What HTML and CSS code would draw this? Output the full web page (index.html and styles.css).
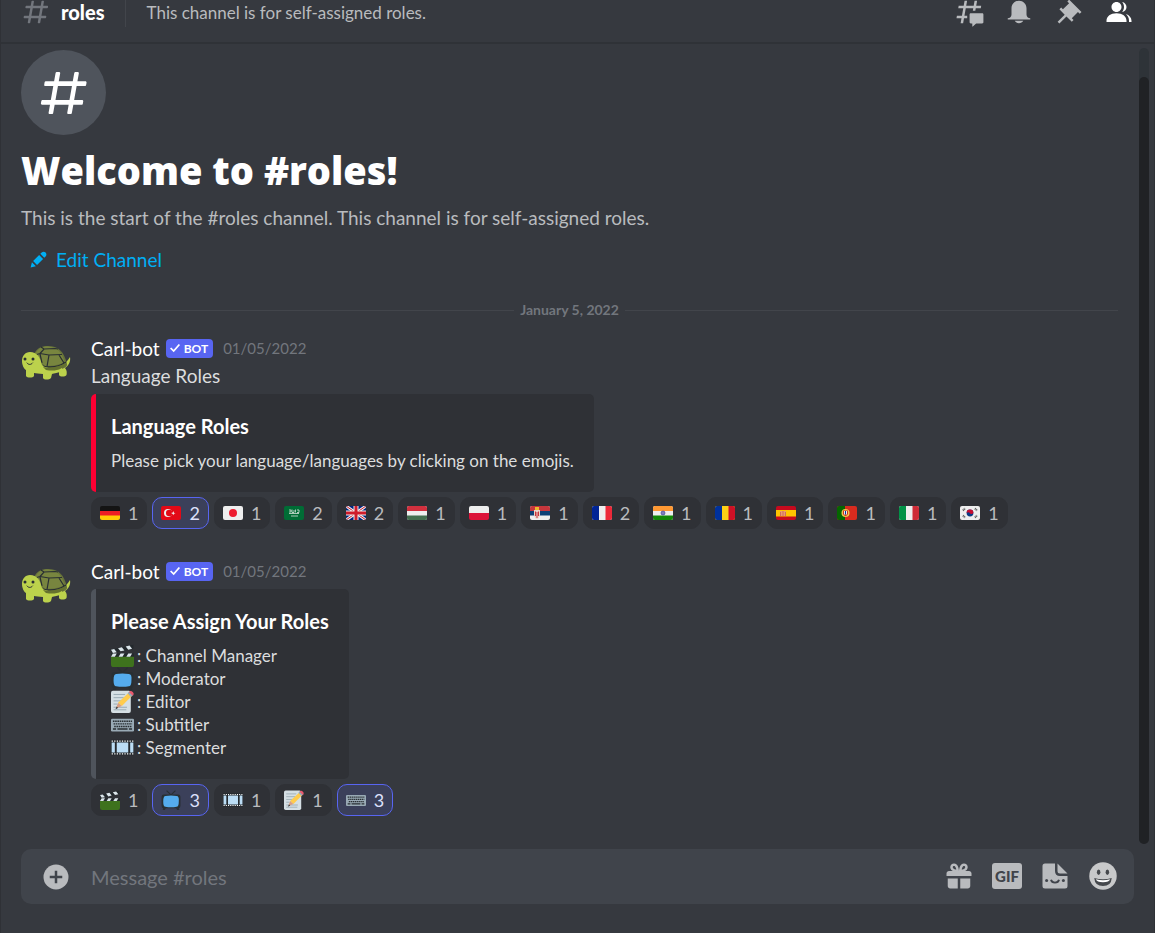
FILE: index.html
```html
<!DOCTYPE html>
<html lang="en">
<head>
<meta charset="utf-8">
<meta name="viewport" content="width=device-width, initial-scale=1">
<title>#roles</title>
<link rel="stylesheet" href="styles.css">
</head>
<body>
<svg class="defs" aria-hidden="true">
  <symbol id="hash" viewBox="0 0 24 24"><path fill-rule="evenodd" fill="currentColor" d="M5.887 21C5.575 21 5.34 20.719 5.394 20.413L6 17H2.595C2.284 17 2.049 16.72 2.103 16.414L2.278 15.414C2.319 15.175 2.527 15 2.77 15H6.35L7.41 9H4.005C3.694 9 3.459 8.72 3.513 8.414L3.688 7.414C3.729 7.175 3.937 7 4.18 7H7.76L8.397 3.413C8.439 3.174 8.647 3 8.889 3H9.873C10.185 3 10.42 3.281 10.366 3.587L9.76 7H15.76L16.397 3.413C16.439 3.174 16.647 3 16.889 3H17.873C18.185 3 18.42 3.281 18.366 3.587L17.76 7H21.165C21.476 7 21.711 7.28 21.657 7.586L21.482 8.586C21.441 8.825 21.233 9 20.99 9H17.41L16.35 15H19.755C20.066 15 20.301 15.28 20.247 15.586L20.072 16.586C20.031 16.825 19.823 17 19.58 17H16L15.363 20.587C15.321 20.826 15.113 21 14.871 21H13.887C13.576 21 13.34 20.719 13.394 20.413L14 17H8L7.363 20.587C7.321 20.826 7.113 21 6.871 21H5.887ZM9.41 9L8.35 15H14.35L15.41 9H9.41Z"/></symbol>
  <symbol id="turtle" viewBox="0 0 50 50">
    <path fill="#bcd24c" d="M40 22C44 20 47 16 49 13C50 18 47 22 44 24C46 26 46 29 45.500 31C44 33 39 33 38 31V26Z"/>
    <path fill="#66723a" d="M12 13C14 5 20 1.500 27 2C37 2 43 7 46 20C47 23 42 25 36 26H22Z"/>
    <path fill="#78853f" d="M14 11C16 5 20 2.500 27 2.500C36 3 41 8 43.500 18C38 21 31 22 24 22Z"/>
    <path fill="none" stroke="#292f33" stroke-width="1.200" d="M14 11L19 9.500L28 11L41 10.500M19 9.500L23 5L34 4.500L37 5M28 11L26 22.500M38 11L43 19M23 5L20 3M19 10L21 19"/>
    <path fill="none" stroke="#292f33" stroke-width="1.200" d="M22 22C30 24 39 22 45 18"/>
    <path fill="#bcd24c" d="M9 8C16 8 19 13 21 21C24 25 34 25 41 22V27C37 29 33 29 31 30L30 34C28 36 23 36 22 34V30C18 30 15 29 13 29V32C12 34 6 34 5 32V26C3 25 1 21 1 17C1 12 4 8 9 8Z"/>
    <path fill="#65722f" d="M22 23C30 25 39 22 45 19C43 25 35 28 25 26Z"/>
    <circle cx="4" cy="15" r="1.500" fill="#292f33"/><circle cx="12" cy="15" r="1.500" fill="#292f33"/>
    <path fill="none" stroke="#292f33" stroke-width="1" stroke-linecap="round" d="M6 19C7.500 21 10 21 11.500 19"/>
  </symbol>
  <symbol id="clapper" viewBox="0 0 36 36">
    <path fill="#3e721d" d="M2 17H36V32Q36 36 32 36H4Q0 36 0 32V15Z"/>
    <path fill="#23292d" d="M0 15H36V20H0ZM0 9L35 1V7L1 15Z"/>
    <path fill="#dce6eb" d="M3 15H9L6 20H0ZM15 15H21L18 20H12ZM27 15H33L30 20H24ZM0 9L5 8L9 13L3 14ZM11 6.500L17 5L21 10L15 11.500ZM23 4L29 2.500L33 7.500L27 9Z"/>
  </symbol>
  <symbol id="tv" viewBox="0 0 36 36">
    <path fill="none" stroke="#292f33" stroke-width="2" d="M10 1L18 9L26 1"/>
    <rect x="1" y="8" width="34" height="25" rx="4" fill="#292f33"/>
    <path fill="#292f33" d="M4 32H9L7 36H3ZM27 32H32L33 36H29Z"/>
    <path fill="#55acee" d="M8 11Q18 9 28 11Q33 11 32 21Q32 30 28 30Q18 32 8 30Q4 30 4 21Q4 11 8 11Z"/>
  </symbol>
  <symbol id="memo" viewBox="0 0 36 36">
    <rect x="0" y="1" width="31" height="35" rx="3" fill="#d5dfe4"/>
    <path stroke="#8fa1ac" stroke-width="1.300" d="M4 7H22M4 12H20M4 17H16M4 22H10M4 27H25M4 31H24"/>
    <path fill="#ffcc4d" d="M11 20L28 4L33 9L17 25Z"/>
    <path fill="#d99e82" d="M11 20L17 25L8 29Z"/><path fill="#292f33" d="M9 26L11 28L7 30Z"/>
    <path fill="#99aab5" d="M26 5L29 2L35 8L31 11Z"/><path fill="#ea596e" d="M28 3Q31 0 34 3Q37 6 34 9Z"/>
  </symbol>
  <symbol id="keyboard" viewBox="0 0 36 36">
    <rect x="0" y="9" width="36" height="20" rx="2" fill="#99aab5"/>
    <path stroke="#292f33" stroke-width="2.300" stroke-dasharray="2.500 1" d="M3 13H33M4 17H33M5 21H32"/>
    <path stroke="#292f33" stroke-width="2.500" d="M3 25H8M10 25H26M28 25H33"/>
  </symbol>
  <symbol id="film" viewBox="0 0 36 36">
    <path fill="#24292d" d="M0 6H36V30H0Z"/>
    <path fill="#bbddf5" d="M1 10H6V26H1ZM9 10H27V26H9ZM30 10H35V26H30Z"/>
    <path stroke="#fff" stroke-width="2" stroke-dasharray="2 2" d="M1 8H36M1 28H36"/>
  </symbol>
  <symbol id="bot-badge" viewBox="0 0 16 16"><path fill="none" stroke="#fff" stroke-width="2" d="M3 8L6.500 11.500L13 4"/></symbol>
  <clipPath id="flag-clip"><rect width="20" height="14" rx="2"/></clipPath>
</svg>

<div class="app">
  <header class="topbar">
    <svg class="icon topbar-hash"><use href="#hash"/></svg>
    <h2 class="topbar-name">roles</h2>
    <p class="topbar-topic">This channel is for self-assigned roles.</p>
    <div class="toolbar">
      <button class="icon-button" type="button" aria-label="Threads"><svg class="icon" viewBox="0 0 24 24" fill="currentColor"><path d="M5.433 21C5.358 21 5.302 20.933 5.315 20.859L6 17H2.143C2.068 17 2.012 16.933 2.025 16.859L2.333 15.099C2.343 15.042 2.392 15 2.451 15H6.350L7.410 9H3.553C3.478 9 3.422 8.933 3.435 8.859L3.743 7.099C3.753 7.042 3.802 7 3.861 7H7.760L8.452 3.099C8.463 3.042 8.512 3 8.570 3H10.327C10.401 3 10.458 3.067 10.445 3.141L9.760 7H15.760L16.452 3.099C16.463 3.042 16.512 3 16.571 3H18.327C18.401 3 18.458 3.067 18.445 3.141L17.760 7H21.617C21.692 7 21.748 7.067 21.735 7.141L21.427 8.901C21.417 8.958 21.367 9 21.309 9H17.410L17.050 11.040H15.050L15.410 9H9.410L8.350 15H10.560V17H8L7.307 20.901C7.297 20.958 7.248 21 7.189 21Z"/><path d="M13.440 12.960C12.910 12.960 12.480 13.390 12.480 13.920V20.221C12.480 20.752 12.910 21.181 13.440 21.181H14.400C14.533 21.181 14.640 21.289 14.640 21.421V23.460C14.640 23.668 14.887 23.777 15.041 23.638L17.486 21.429C17.662 21.270 17.892 21.181 18.129 21.181H22.560C23.090 21.181 23.520 20.752 23.520 20.221V13.920C23.520 13.390 23.090 12.960 22.560 12.960Z"/></svg></button>
      <button class="icon-button" type="button" aria-label="Notification settings"><svg class="icon" viewBox="0 0 24 24" fill="currentColor"><path d="M18 9V14C18 15.657 19.344 17 21 17V18H3V17C4.656 17 6 15.657 6 14V9C6 5.686 8.686 3 12 3C15.314 3 18 5.686 18 9ZM12 21C10.524 21 9.248 20.190 8.555 19H15.445C14.752 20.190 13.476 21 12 21Z"/></svg></button>
      <button class="icon-button" type="button" aria-label="Pinned messages"><svg class="icon" viewBox="0 0 24 24" fill="currentColor"><path d="M22 12L12.101 2.101L10.686 3.514L12.101 4.929L7.151 9.878V9.880L5.736 8.465L4.322 9.880L8.565 14.122L2.908 19.778L4.322 21.192L9.979 15.536L14.222 19.778L15.636 18.364L14.222 16.950L19.171 12H19.172L20.586 13.414Z"/></svg></button>
      <button class="icon-button is-active" type="button" aria-label="Member list"><svg class="icon" viewBox="0 0 24 24" fill="currentColor"><path d="M14 8.006C14 10.211 12.206 12.006 10 12.006C7.795 12.006 6 10.211 6 8.006C6 5.801 7.794 4.006 10 4.006C12.206 4.006 14 5.801 14 8.006ZM2 19.006C2 15.473 5.290 13.006 10 13.006C14.711 13.006 18 15.473 18 19.006V20.006H2Z"/><path d="M20 20.006H22V19.006C22 16.443 20.270 14.442 17.521 13.535C19.062 14.913 20 16.806 20 19.006ZM14.883 11.908C16.666 11.504 18 9.908 18 8.006C18 5.969 16.469 4.282 14.497 4.037C15.432 5.095 16 6.485 16 8.006C16 9.449 15.489 10.774 14.638 11.810Z"/></svg></button>
    </div>
  </header>

  <div class="scroller">
    <main class="content">
      <section class="welcome">
        <div class="channel-badge"><svg class="channel-badge-hash"><use href="#hash"/></svg></div>
        <h1 class="welcome-title">Welcome to #roles!</h1>
        <p class="welcome-text">This is the start of the #roles channel. This channel is for self-assigned roles.</p>
        <button class="edit-channel" type="button"><svg class="edit-icon" viewBox="0 0 24 24" fill="currentColor"><path fill-rule="evenodd" d="M19.293 9.830L20.982 8.141C22.339 6.784 22.339 4.567 20.982 3.175C19.625 1.818 17.408 1.818 16.016 3.175L14.327 4.863ZM12.808 6.382L5.184 14.006L10.151 18.973L17.774 11.349ZM2.015 22.143L8.681 20.443L3.714 15.476Z"/></svg>Edit Channel</button>
      </section>

      <div class="date-divider"><span class="date-text">January 5, 2022</span></div>

      <article class="message">
        <svg class="avatar" role="img" aria-label="Carl-bot"><use href="#turtle"/></svg>
        <div class="message-body">
          <div class="message-head"><span class="author">Carl-bot</span><span class="bot-tag"><svg class="bot-check"><use href="#bot-badge"/></svg>BOT</span><time class="timestamp">01/05/2022</time></div>
          <p class="message-text">Language Roles</p>
          <div class="embed embed-red">
            <h3 class="embed-title">Language Roles</h3>
            <p class="embed-text">Please pick your language/languages by clicking on the emojis.</p>
          </div>
          <div class="reactions">
            <button class="reaction" type="button" aria-label="Germany"><svg class="flag" viewBox="0 0 20 14"><g clip-path="url(#flag-clip)"><path fill="#141414" d="M0 0H20V5H0Z"/><path fill="#ed1f24" d="M0 5H20V10H0Z"/><path fill="#ffcd05" d="M0 9.500H20V14H0Z"/></g></svg>1</button>
            <button class="reaction is-mine" type="button" aria-label="Turkey"><svg class="flag" viewBox="0 0 20 14"><rect width="20" height="14" rx="2" fill="#e30917"/><circle cx="7" cy="7" r="4" fill="#eee"/><circle cx="8.200" cy="7" r="3.200" fill="#e30917"/><path fill="#eee" d="M10 7L11.800 6.500L12.700 5L12.900 6.700L14.500 7.300L12.900 7.700L12.300 9.200L11.500 7.700Z"/></svg>2</button>
            <button class="reaction" type="button" aria-label="Japan"><svg class="flag" viewBox="0 0 20 14"><rect width="20" height="14" rx="2" fill="#eee"/><circle cx="10" cy="7" r="4" fill="#ed1b2f"/></svg>1</button>
            <button class="reaction" type="button" aria-label="Saudi Arabia"><svg class="flag" viewBox="0 0 20 14"><rect width="20" height="14" rx="2" fill="#006c35"/><path fill="none" stroke="#d5e5dc" stroke-width=".8" d="M5 4H7V6H5M8 3.500V6.500H10V4M11.500 3.500V6.500M13 4H15V6.500H13M5 7.500H15M7 10H14"/></svg>2</button>
            <button class="reaction" type="button" aria-label="United Kingdom"><svg class="flag" viewBox="0 0 20 14"><g clip-path="url(#flag-clip)"><path fill="#00247d" d="M0 0H20V14H0Z"/><path stroke="#eee" stroke-width="3" d="M0 0L20 14M20 0L0 14"/><path stroke="#cf1b2b" stroke-width="1" d="M0 0L20 14M20 0L0 14"/><path stroke="#eee" stroke-width="5" d="M10 0V14M0 7H20"/><path stroke="#cf1b2b" stroke-width="3" d="M10 0V14M0 7H20"/></g></svg>2</button>
            <button class="reaction" type="button" aria-label="Hungary"><svg class="flag" viewBox="0 0 20 14"><g clip-path="url(#flag-clip)"><path fill="#eee" d="M0 0H20V14H0Z"/><path fill="#d2303e" d="M0 0H20V5H0Z"/><path fill="#446f4f" d="M0 9.500H20V14H0Z"/></g></svg>1</button>
            <button class="reaction" type="button" aria-label="Poland"><svg class="flag" viewBox="0 0 20 14"><g clip-path="url(#flag-clip)"><path fill="#eee" d="M0 0H20V7H0Z"/><path fill="#dc1339" d="M0 7H20V14H0Z"/></g></svg>1</button>
            <button class="reaction" type="button" aria-label="Serbia"><svg class="flag" viewBox="0 0 20 14"><g clip-path="url(#flag-clip)"><path fill="#eee" d="M0 0H20V14H0Z"/><path fill="#c6363c" d="M0 0H20V5H0Z"/><path fill="#0c4076" d="M0 5H20V9.500H0Z"/><path fill="#e9d5cc" d="M4 4H10V9Q9 13 7 13Q5 13 4 9Z"/><path stroke="#c6363c" stroke-width="1" d="M5.500 5.500V10M8.500 5.500V10M7 6V12"/><path fill="#edb92e" d="M5 1H9V4H5Z"/></g></svg>1</button>
            <button class="reaction" type="button" aria-label="France"><svg class="flag" viewBox="0 0 20 14"><g clip-path="url(#flag-clip)"><path fill="#eee" d="M0 0H20V14H0Z"/><path fill="#002495" d="M0 0H7V14H0Z"/><path fill="#ed2939" d="M13.500 0H20V14H13.500Z"/></g></svg>2</button>
            <button class="reaction" type="button" aria-label="India"><svg class="flag" viewBox="0 0 20 14"><g clip-path="url(#flag-clip)"><path fill="#eee" d="M0 0H20V14H0Z"/><path fill="#ff9933" d="M0 0H20V5H0Z"/><path fill="#138808" d="M0 9.500H20V14H0Z"/><circle cx="10" cy="7" r="2" fill="#8080bb" stroke="#33338f" stroke-width=".6"/></g></svg>1</button>
            <button class="reaction" type="button" aria-label="Romania"><svg class="flag" viewBox="0 0 20 14"><g clip-path="url(#flag-clip)"><path fill="#fcd116" d="M0 0H20V14H0Z"/><path fill="#00319c" d="M0 0H7V14H0Z"/><path fill="#ce1126" d="M13.500 0H20V14H13.500Z"/></g></svg>1</button>
            <button class="reaction" type="button" aria-label="Spain"><svg class="flag" viewBox="0 0 20 14"><g clip-path="url(#flag-clip)"><path fill="#c60a1d" d="M0 0H20V14H0Z"/><path fill="#ffc400" d="M0 4H20V10.500H0Z"/><path fill="#ea9a70" d="M4 5H10V10H4Z"/><path stroke="#c8605a" stroke-width=".8" d="M4.500 6V10M7 5V10M9.500 6V10"/></g></svg>1</button>
            <button class="reaction" type="button" aria-label="Portugal"><svg class="flag" viewBox="0 0 20 14"><g clip-path="url(#flag-clip)"><path fill="#d82b1e" d="M0 0H20V14H0Z"/><path fill="#056600" d="M0 0H8V14H0Z"/><circle cx="8.500" cy="7" r="4" fill="#f1c94a"/><path fill="#ca3028" d="M6 4.500H11V8Q8.500 12 6 8Z"/><path fill="#eee" d="M7 5H10V8.500H7Z"/><path stroke="#063e93" stroke-width="1" d="M8.500 5V8.500"/></g></svg>1</button>
            <button class="reaction" type="button" aria-label="Italy"><svg class="flag" viewBox="0 0 20 14"><g clip-path="url(#flag-clip)"><path fill="#eee" d="M0 0H20V14H0Z"/><path fill="#009246" d="M0 0H7V14H0Z"/><path fill="#ce2b37" d="M13.500 0H20V14H13.500Z"/></g></svg>1</button>
            <button class="reaction" type="button" aria-label="South Korea"><svg class="flag" viewBox="0 0 20 14"><rect width="20" height="14" rx="2" fill="#eee"/><circle cx="10" cy="7" r="3.400" fill="#0b3a83"/><path fill="#c60c30" d="M6.600 7A3.400 3.400 0 0 1 13.400 7Q11.500 9 10 7.200Q8.500 5.600 6.600 7Z"/><path stroke="#444" stroke-width="2" stroke-dasharray=".8 .4" d="M3 4.500L5 2.500M15 2.500L17 4.500M3 9.500L5 11.500M15 11.500L17 9.500"/></svg>1</button>
          </div>
        </div>
      </article>

      <article class="message">
        <svg class="avatar" role="img" aria-label="Carl-bot"><use href="#turtle"/></svg>
        <div class="message-body">
          <div class="message-head"><span class="author">Carl-bot</span><span class="bot-tag"><svg class="bot-check"><use href="#bot-badge"/></svg>BOT</span><time class="timestamp">01/05/2022</time></div>
          <div class="embed">
            <h3 class="embed-title">Please Assign Your Roles</h3>
            <ul class="role-list">
              <li class="role"><svg class="emoji"><use href="#clapper"/></svg>: Channel Manager</li>
              <li class="role"><svg class="emoji"><use href="#tv"/></svg>: Moderator</li>
              <li class="role"><svg class="emoji"><use href="#memo"/></svg>: Editor</li>
              <li class="role"><svg class="emoji"><use href="#keyboard"/></svg>: Subtitler</li>
              <li class="role"><svg class="emoji"><use href="#film"/></svg>: Segmenter</li>
            </ul>
          </div>
          <div class="reactions">
            <button class="reaction" type="button" aria-label="Channel Manager"><svg class="reaction-emoji"><use href="#clapper"/></svg>1</button>
            <button class="reaction is-mine" type="button" aria-label="Moderator"><svg class="reaction-emoji"><use href="#tv"/></svg>3</button>
            <button class="reaction" type="button" aria-label="Segmenter"><svg class="reaction-emoji"><use href="#film"/></svg>1</button>
            <button class="reaction" type="button" aria-label="Editor"><svg class="reaction-emoji"><use href="#memo"/></svg>1</button>
            <button class="reaction is-mine" type="button" aria-label="Subtitler"><svg class="reaction-emoji"><use href="#keyboard"/></svg>3</button>
          </div>
        </div>
      </article>
    </main>
    <div class="scrollbar"><div class="scrollbar-thumb"></div></div>
  </div>

  <form class="composer">
    <button class="icon-button" type="button" aria-label="Attach a file"><svg class="icon" viewBox="0 0 24 24"><circle cx="12" cy="12" r="10" fill="currentColor"/><path stroke="#40444b" stroke-width="2" d="M12 7V17M7 12H17"/></svg></button>
    <input class="composer-input" type="text" placeholder="Message #roles" aria-label="Message #roles">
    <div class="composer-tools">
      <button class="icon-button" type="button" aria-label="Send a gift"><svg class="icon" viewBox="0 0 24 24" fill="currentColor"><path fill-rule="evenodd" d="M16.886 7.999H20C21.104 7.999 22 8.896 22 9.999V11.999H2V9.999C2 8.896 2.897 7.999 4 7.999H7.114C6.663 7.764 6.236 7.477 5.879 7.121C4.709 5.951 4.709 4.048 5.879 2.879C7.012 1.746 8.986 1.745 10.121 2.877C11.758 4.514 11.979 7.595 11.998 7.941L11.990 7.999H12.010L12.002 7.941C12.022 7.595 12.242 4.514 13.879 2.877C15.014 1.745 16.986 1.746 18.121 2.877C19.290 4.049 19.290 5.952 18.121 7.121C17.764 7.477 17.337 7.764 16.886 7.999ZM7.293 5.707C6.903 5.316 6.903 4.682 7.293 4.292C7.481 4.103 7.732 4 8 4C8.268 4 8.519 4.103 8.707 4.292C9.297 4.882 9.641 5.940 9.825 6.822C8.945 6.639 7.879 6.293 7.293 5.707ZM14.174 6.824C14.359 5.941 14.702 4.883 15.293 4.293C15.481 4.103 15.732 4 16 4C16.268 4 16.519 4.103 16.706 4.291C17.096 4.682 17.097 5.316 16.707 5.707C16.116 6.298 15.057 6.642 14.174 6.824ZM3 13.999V19.999C3 21.102 3.897 21.999 5 21.999H11V13.999ZM13 13.999V21.999H19C20.104 21.999 21 21.102 21 19.999V13.999Z"/></svg></button>
      <button class="gif-button" type="button">GIF</button>
      <button class="icon-button" type="button" aria-label="Stickers"><svg class="icon" viewBox="0 0 24 24"><path fill="currentColor" d="M4 2H12V8Q12 12 16 12H22V20Q22 22 20 22H4Q2 22 2 20V4Q2 2 4 2ZM14 2L22 10H16Q14 10 14 8Z"/><circle cx="5.300" cy="15.500" r="1.200" fill="#40444b"/><circle cx="18.700" cy="15.500" r="1.200" fill="#40444b"/><path fill="none" stroke="#40444b" stroke-width="1.500" d="M8.800 15C9.500 18 14.500 18 15.200 15"/></svg></button>
      <button class="icon-button" type="button" aria-label="Emoji"><svg class="icon" viewBox="0 0 24 24"><circle cx="12" cy="12" r="11" fill="#c8c9ca"/><ellipse cx="8.500" cy="9" rx="1.400" ry="2.200" fill="#45484c"/><ellipse cx="15.500" cy="9" rx="1.400" ry="2.200" fill="#45484c"/><path fill="#45484c" d="M5 13.500Q12 15.500 19 13.500Q18.500 20 12 20Q5.500 20 5 13.500Z"/><path fill="#fff" d="M6.300 14.600Q12 16 17.700 14.600Q17 17 12 17Q7 17 6.300 14.600Z"/></svg></button>
    </div>
  </form>
</div>
</body>
</html>
```
FILE: styles.css
```css
* {
  box-sizing: border-box;
}

body {
  margin: 0;
  background: #36393f;
  color: #dcddde;
  font-family: Lato, "Noto Sans", sans-serif;
  font-size: 19px;
}

h1, h2, h3, p, ul {
  margin: 0;
  padding: 0;
}

button {
  padding: 0;
  border: 0;
  background: none;
  color: inherit;
  font: inherit;
  cursor: pointer;
}

svg {
  display: block;
  flex: none;
}

.defs {
  position: absolute;
  width: 0;
  height: 0;
}

.app {
  display: flex;
  flex-direction: column;
  min-height: 100vh;
  border-left: 1px solid #2f3136;
  border-right: 1px solid #2f3136;
}

.icon {
  width: 30px;
  height: 30px;
}

.icon-button {
  width: 30px;
  height: 30px;
  color: #b9bbbe;
}

.icon-button.is-active {
  color: #fff;
}

/* Channel header */
.topbar {
  display: flex;
  align-items: center;
  height: 44px;
  padding: 0 20px 18px;
  border-bottom: 2px solid #2f3237;
}

.topbar-hash {
  color: #72767d;
}

.topbar-name {
  margin-left: 10px;
  padding-right: 20px;
  border-right: 1px solid #42454b;
  color: #fff;
  font-size: 20px;
  font-weight: 900;
  line-height: 30px;
}

.topbar-topic {
  flex: 1;
  padding-left: 21px;
  color: #b9bbbe;
  font-size: 17px;
}

.toolbar {
  display: flex;
  gap: 20px;
}

/* Message area */
.scroller {
  display: flex;
  flex: 1;
  padding-right: 5px;
}

.content {
  flex: 1;
  min-width: 0;
  padding: 6px 21px 0 20px;
}

.scrollbar {
  width: 10px;
  margin: 4px 0 5px;
  padding-top: 29px;
  border-radius: 5px;
  background: #2e3338;
}

.scrollbar-thumb {
  height: 100%;
  border-radius: 5px;
  background: #202225;
}

.channel-badge {
  display: grid;
  place-items: center;
  width: 85px;
  height: 85px;
  border-radius: 50%;
  background: #4f545c;
  color: #fff;
}

.channel-badge-hash {
  width: 56px;
  height: 56px;
}

.welcome-title {
  margin-top: 10px;
  color: #fff;
  font-family: "Open Sans", "Noto Sans", sans-serif;
  font-size: 38px;
  font-weight: 800;
  line-height: 50px;
}

.welcome-text {
  margin-top: 10px;
  color: #b9bbbe;
  line-height: 25px;
}

.edit-channel {
  display: flex;
  align-items: center;
  gap: 8px;
  height: 30px;
  margin-top: 14px;
  padding: 0 8px;
  color: #00aff4;
}

.edit-icon {
  width: 19px;
  height: 19px;
}

.date-divider {
  display: flex;
  align-items: center;
  gap: 6px;
  margin-top: 27px;
  color: #72767d;
  font-size: 14px;
  font-weight: 700;
  line-height: 18px;
}

.date-divider::before,
.date-divider::after {
  content: "";
  flex: 1;
  height: 1px;
  background: #42454b;
}

.message {
  display: flex;
  gap: 20px;
  margin-top: 28px;
}

.date-divider + .message {
  margin-top: 15px;
}

.avatar {
  width: 50px;
  height: 50px;
  margin-top: 10px;
}

.message-body {
  flex: 1;
  min-width: 0;
}

.message-head {
  display: flex;
  align-items: center;
  height: 28px;
}

.author {
  color: #fff;
}

.bot-tag {
  display: flex;
  align-items: center;
  gap: 2px;
  height: 19px;
  margin-left: 6px;
  padding: 0 5px 0 2px;
  border-radius: 4px;
  background: #5865f2;
  color: #fff;
  font-size: 12px;
  font-weight: 700;
}

.bot-check {
  width: 14px;
  height: 14px;
}

.timestamp {
  margin-left: 10px;
  color: #72767d;
  font-size: 15px;
}

.message-text {
  line-height: 28px;
}

.embed {
  width: fit-content;
  max-width: 100%;
  margin-top: 4px;
  padding: 20px 20px 20px 15px;
  border-left: 5px solid #4f545c;
  border-radius: 5px;
  background: #2f3136;
}

.embed-red {
  border-left-color: #ff0033;
}

.embed-title {
  margin-bottom: 10px;
  color: #fff;
  font-size: 20px;
  font-weight: 700;
  line-height: 25px;
}

.embed-text {
  font-size: 17px;
  line-height: 23px;
}

.role-list {
  list-style: none;
}

.role {
  display: flex;
  align-items: center;
  gap: 3px;
  height: 23px;
  font-size: 17px;
}

.emoji {
  width: 23px;
  height: 23px;
}

.reactions {
  display: flex;
  flex-wrap: wrap;
  gap: 5px;
  margin-top: 5px;
}

.reaction {
  display: flex;
  align-items: center;
  gap: 8px;
  height: 32px;
  padding: 0 8px;
  border: 1px solid #2f3136;
  border-radius: 10px;
  background: #2f3136;
  color: #b9bbbe;
  font-size: 18px;
}

.reaction.is-mine {
  border-color: #5865f2;
  background: #3b405a;
  color: #dee0fc;
}

.flag {
  width: 20px;
  height: 14px;
}

.reaction-emoji {
  width: 20px;
  height: 20px;
}

/* Message box */
.composer {
  display: flex;
  align-items: center;
  height: 55px;
  margin: 0 20px 29px;
  padding: 0 16px 0 20px;
  border-radius: 10px;
  background: #40444b;
}

.composer-input {
  flex: 1;
  min-width: 0;
  height: 40px;
  margin-left: 20px;
  padding: 0;
  border: 0;
  outline: 0;
  background: none;
  color: #dcddde;
  font: inherit;
  font-size: 20px;
}

.composer-input::placeholder {
  color: #72767d;
  opacity: 1;
}

.composer-tools {
  display: flex;
  align-items: center;
  gap: 18px;
  padding-bottom: 2px;
}

.gif-button {
  width: 30px;
  height: 26px;
  border-radius: 3px;
  background: #b9bbbe;
  color: #40444b;
  font-size: 15px;
  font-weight: 900;
}
```
